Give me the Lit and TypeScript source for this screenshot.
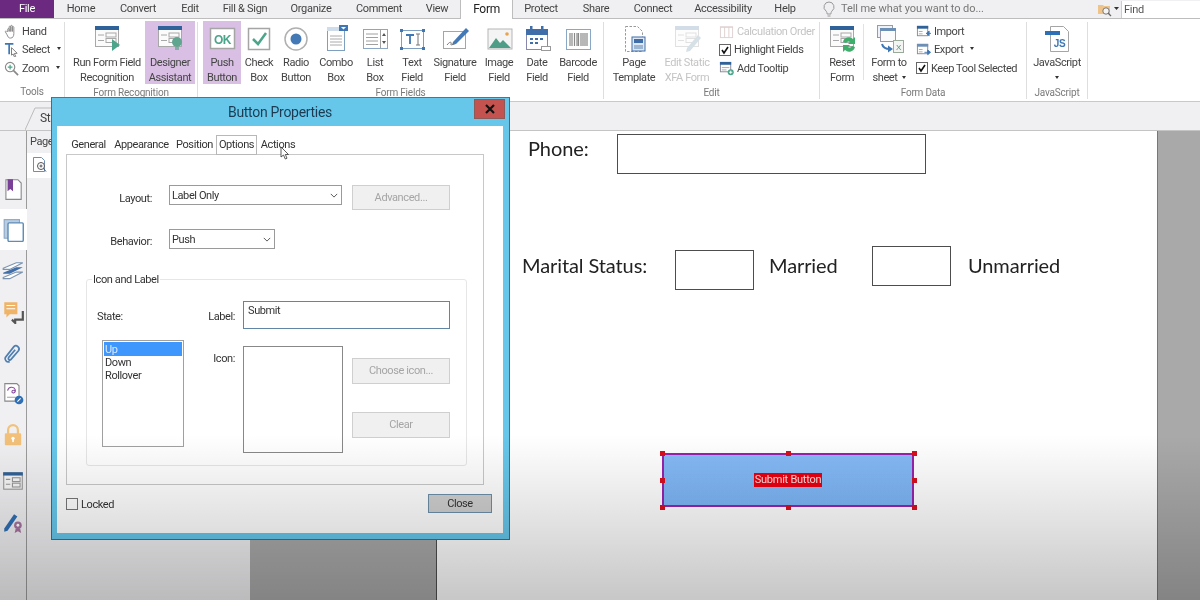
import { LitElement, css, html, svg } from "lit";
import { customElement } from "lit/decorators.js";

const tabs = [
  ["Home", 54], ["Convert", 60], ["Edit", 44], ["Fill & Sign", 66], ["Organize", 66], ["Comment", 70], ["View", 46],
  ["Form", 53], ["Protect", 56], ["Share", 54], ["Connect", 60], ["Accessibility", 80], ["Help", 44],
] as [string, number][];

// shared window glyph used by a few of the form icons
const win = (c = "#2f6299", s = "#a8a8a8") => svg`
  <rect x="3.5" y="2.5" width="23" height="20" fill="#fbfbfb" stroke=${s}/>
  <rect x="3" y="2" width="24" height="4" fill=${c}/>
  <path d="M6 11h6M6 16.500h6" stroke=${s}/>
  <rect x="14" y="9" width="10" height="4" fill="none" stroke=${s}/>
  <rect x="14" y="14.500" width="10" height="4" fill="none" stroke=${s}/>`;

const icons: Record<string, any> = {
  run: svg`${win()}<path d="M20 15l8 6-8 6z" fill="#4ba58a"/>`,
  designer: svg`${win()}<circle cx="22" cy="18" r="5" fill="#5fa58f"/><rect x="20" y="23" width="4" height="3" fill="#8aa"/>`,
  push: svg`<rect x="3.500" y="4.500" width="24" height="20" fill="#fff" stroke="#a5a5a5" stroke-width="1.500"/><text x="15.500" y="19.500" text-anchor="middle" font-family="Liberation Sans" font-weight="700" font-size="12" fill="#4ba58a">OK</text>`,
  check: svg`<rect x="4.500" y="4.500" width="21" height="21" fill="#fff" stroke="#a5a5a5" stroke-width="1.500"/><path d="M9 15l5 5 8-11" fill="none" stroke="#4ba58a" stroke-width="2.500"/>`,
  radio: svg`<circle cx="15" cy="15" r="11" fill="#fff" stroke="#b0b0b0" stroke-width="1.500"/><circle cx="15" cy="15" r="5.500" fill="#4379b5"/>`,
  combo: svg`<rect x="6.500" y="3.500" width="17" height="23" fill="#fff" stroke="#7f9fc0"/><rect x="6" y="3" width="18" height="4" fill="#cfdcea"/><path d="M9 12h12M9 15h12M9 18h12M9 21h12" stroke="#aaa"/><rect x="18" y="1" width="9" height="6" fill="#3f77b4"/><path d="M20 3l2.500 2.500L25 3z" fill="#fff"/>`,
  list: svg`<rect x="3.500" y="5.500" width="24" height="19" fill="#fff" stroke="#8aa7c6"/><path d="M20.500 5.500v19M6 10h12M6 13.500h12M6 17h12M6 20.500h12" stroke="#a0a0a0"/><path d="M24 9l-2 3h4zM24 20l-2-3h4z" fill="#555"/>`,
  text: svg`<rect x="4.500" y="6.500" width="22" height="18" fill="#fff" stroke="#7f9fc0"/><g fill="#3f77b4"><rect x="3" y="5" width="3" height="3"/><rect x="25" y="5" width="3" height="3"/><rect x="3" y="23" width="3" height="3"/><rect x="25" y="23" width="3" height="3"/></g><path d="M9 11h8M13 11v9" stroke="#3f77b4" stroke-width="1.800" fill="none"/><path d="M21 10v11M19 10h4M19 21h4" stroke="#777" fill="none"/>`,
  signature: svg`<rect x="3.500" y="7.500" width="22" height="17" fill="#fff" stroke="#a5a5a5"/><path d="M13 18L26 4l3 3-13 13-4 1z" fill="#4379b5"/><path d="M7 21c3-4 5-3 4-1s3 0 5-1" fill="none" stroke="#777"/>`,
  image: svg`<rect x="4" y="5" width="24" height="20" fill="#f4f4f4" stroke="#b5b5b5"/><path d="M5 24l7-10 4 5 3-3 8 8z" fill="#4f9d86"/><circle cx="23" cy="10" r="1.800" fill="#e9a24f"/>`,
  date: svg`<rect x="4.500" y="5.500" width="21" height="20" fill="#fff" stroke="#88a"/><rect x="4" y="5" width="22" height="6" fill="#3f6ea8"/><rect x="8" y="2" width="2.500" height="5" fill="#3f6ea8"/><rect x="19" y="2" width="2.500" height="5" fill="#3f6ea8"/><g fill="#3f6ea8"><rect x="8" y="14" width="3" height="2"/><rect x="13" y="14" width="3" height="2"/><rect x="18" y="14" width="3" height="2"/><rect x="8" y="18" width="3" height="2"/><rect x="13" y="18" width="3" height="2"/></g><rect x="19.500" y="22.500" width="9" height="4" fill="#fff" stroke="#999"/>`,
  barcode: svg`<rect x="3.500" y="5.500" width="24" height="20" fill="#fff" stroke="#8aa7c6"/><path d="M7 9v13M9 9v13M11.500 9v13M14 9v13M15.500 9v13M18 9v13M20 9v13M22 9v13M24 9v13" stroke="#888" stroke-width="1.200"/>`,
  template: svg`<path d="M6.500 2.500h12l5 5v20h-17z" fill="#fff" stroke="#999" stroke-dasharray="2.500 1.500"/><rect x="13" y="13" width="13" height="14" fill="#dfe8f2" stroke="#3f6ea8"/><rect x="15" y="15" width="9" height="4" fill="#3f6ea8"/><rect x="15" y="21" width="9" height="4" fill="#9cb6d3"/>`,
  xfa: svg`<g opacity=".35">${win("#7f9fc0", "#aaa")}<path d="M15 24L26 11l3 3-11 13-4 1z" fill="#8ab"/></g>`,
  reset: svg`${win()}<path d="M16 18a6 6 0 0 1 10-3l2-2v7h-7l2-2a3 3 0 0 0-4 1zM28 23a6 6 0 0 1-10 3l-2 2v-7h7l-2 2a3 3 0 0 0 4-1z" fill="#3fae6b"/>`,
  sheet: svg`<rect x="3.500" y="1.500" width="15" height="12" fill="#eef2f6" stroke="#99a"/><rect x="6.500" y="4.500" width="15" height="13" fill="#fbfbfb" stroke="#99a"/><rect x="6" y="4" width="16" height="3" fill="#6c8fb5"/><path d="M8 20c1 4 4 5 8 5" fill="none" stroke="#3f77b4" stroke-width="2"/><path d="M14 21.500l5 3.500-5 3.500z" fill="#3f77b4"/><rect x="19.500" y="16.500" width="10" height="12" fill="#f4f4f4" stroke="#9a9"/><text x="24.500" y="26" text-anchor="middle" font-family="Liberation Sans" font-size="8" fill="#3f9a5f">X</text>`,
  js: svg`<path d="M8.500 2.500h13l5 5v20h-18z" fill="#fff" stroke="#a5a5a5"/><rect x="3" y="7" width="15" height="4" fill="#2f6fb5"/><text x="17.500" y="23" text-anchor="middle" font-family="Liberation Sans" font-weight="700" font-size="10" fill="#3f77b4">JS</text>`,
};

const small: Record<string, any> = {
  hand: svg`<path d="M4 8V5.500c0-1 1.500-1 1.500 0V8V3c0-1 1.700-1 1.700 0v5-5.800c0-1 1.700-1 1.700 0V8V3.500c0-1 1.600-1 1.600 0V10c0 3-1 5-3.500 5S4.500 14 3 11L1.500 8.500C1 7.500 2.300 7 3 8z" fill="#fff" stroke="#888"/>`,
  select: svg`<path d="M1 2h9M5.500 2v11" stroke="#3f77b4" stroke-width="1.800" fill="none"/><path d="M8 6l6 6-3 .300 1.500 3-1.500.500-1.300-3L8 14z" fill="#fff" stroke="#777"/>`,
  zoom: svg`<circle cx="6.500" cy="6.500" r="5" fill="#fff" stroke="#888" stroke-width="1.200"/><path d="M10 10l5 5" stroke="#888" stroke-width="1.800"/><path d="M4 6.500h5M6.500 4v5" stroke="#4ba58a" stroke-width="1.300"/>`,
  calc: svg`<g opacity=".4"><rect x="1.500" y="3.500" width="13" height="11" fill="#fff" stroke="#b08a8a"/><path d="M1 3h14M6 3v11M10.500 3v11" stroke="#b08a8a"/></g>`,
  tooltip: svg`<rect x="1.500" y="1.500" width="11" height="10" fill="#fff" stroke="#889"/><rect x="1" y="1" width="12" height="3" fill="#2f6299"/><path d="M3 7h8M3 9.500h5" stroke="#aaa"/><circle cx="12.500" cy="12" r="3.200" fill="#4ba58a"/><path d="M10.800 12h3.400M12.500 10.300v3.400" stroke="#fff"/>`,
  import: svg`<rect x="1.500" y="2.500" width="11" height="10" fill="#fff" stroke="#889"/><rect x="1" y="2" width="12" height="3" fill="#2f6299"/><path d="M3 8h4M3 10.500h4" stroke="#aaa"/><path d="M16 10H11M11 10l3-2.500v5z" stroke="#3f77b4" fill="#3f77b4"/>`,
  export: svg`<rect x="1.500" y="2.500" width="11" height="10" fill="#fff" stroke="#889"/><rect x="1" y="2" width="12" height="3" fill="#6c8fb5"/><path d="M3 8h4M3 10.500h4" stroke="#aaa"/><path d="M9 11h5M15.500 11l-3-2.500v5z" stroke="#3f77b4" fill="#3f77b4"/>`,
};

const side: any[] = [
  svg`<path d="M4.500 2.500h11l3 3v15h-14z" fill="#fff" stroke="#888"/><path d="M6 2h5v11l-2.500-2L6 13z" fill="#7a3f96"/>`,
  svg`<rect x="2" y="1.500" width="14" height="17" fill="#b8cde2" stroke="#8aa7c6"/><rect x="5.500" y="4.500" width="14" height="17" rx="1" fill="#fff" stroke="#5f8cb8" stroke-width="1.300"/>`,
  svg`<path d="M2 17L14 12H20L8 18H2z" fill="#fff" stroke="#7a94b0"/><path d="M2 12.500L14 7.500H20L8 13.500H2z" fill="#3f6ea8"/><path d="M2 8.500L14 3.500H20L8 9.500H2z" fill="#fff" stroke="#7a94b0"/>`,
  svg`<path d="M3 2h12v11H8l-3 3v-3H3z" fill="#f0b469"/><path d="M5 5h8M5 8h8" stroke="#fff"/><path d="M20 10v8h-7v3l-3-3" fill="none" stroke="#555" stroke-width="2"/>`,
  svg`<path d="M8 19c-3 1-5-2-4-4l8-10c2-2 6 1 4 4l-7 8c-1 1-3 0-2-2l6-7" fill="none" stroke="#4f7fb0" stroke-width="1.600"/>`,
  svg`<path d="M3.500 1.500h11l2 2v14h-13z" fill="#fff" stroke="#888"/><path d="M6 8c1-4 6-4 7-1s-3 4-3 2 3-2 3 0" fill="none" stroke="#8a4f9e"/><path d="M5.500 14h8" stroke="#aaa"/><circle cx="16.500" cy="16.500" r="4" fill="#2f6fb5"/><path d="M15 18l3-3" stroke="#fff"/>`,
  svg`<path d="M7 10V6.500a4.500 4.500 0 0 1 9 0V10" fill="none" stroke="#f0c27c" stroke-width="2" transform="translate(-.5 0)"/><rect x="3.500" y="9.500" width="15" height="11" rx="1" fill="#f2c078"/><circle cx="11" cy="14" r="1.500" fill="#fff"/><rect x="10.300" y="14" width="1.500" height="3.500" fill="#fff"/>`,
  svg`<rect x="2.500" y="3.500" width="17" height="15" fill="#f7f7f7" stroke="#999"/><rect x="2" y="3" width="18" height="3" fill="#2f6299"/><path d="M4.500 9.500h4M4.500 14h4" stroke="#999"/><rect x="10.500" y="8" width="7" height="3.500" fill="none" stroke="#999"/><rect x="10.500" y="13" width="7" height="3.500" fill="none" stroke="#999"/>`,
  svg`<path d="M3 17L12 4l3 2-9 13-3 1z" fill="#2f6fb5"/><circle cx="15.500" cy="14" r="3.500" fill="#a5739f"/><path d="M13.500 17l-1 4 3-1.500 3 1.500-1-4" fill="#a5739f"/><circle cx="15.500" cy="14" r="1.300" fill="#fff"/>`,
];

const chevron = html`<svg class="chev" viewBox="0 0 10 6"><path d="M1 1l4 4 4-4" fill="none" stroke="#444" stroke-width="1.100"/></svg>`;

@customElement("button-props")
class ButtonProps extends LitElement {
  static styles = css`
    :host {
      display: block;
      width: 459px;
      height: 443px;
      box-sizing: border-box;
      border: 1px solid #3d6f88;
      border-top-color: #46788f;
      background: #66c7eb;
      padding: 0 6px 5px 5px;
      font: 11px/14px Roboto, sans-serif;
      letter-spacing: -0.4px;
      color: #333;
    }
    .title {
      position: relative;
      height: 28px;
      text-align: center;
      font-size: 14px;
      line-height: 29px;
      letter-spacing: -0.3px;
      color: #1c3b52;
    }
    .close {
      position: absolute;
      right: -2px;
      top: 1px;
      width: 31px;
      height: 20px;
      background: #c4534f;
      border: 1px solid #8d5a5a;
      box-sizing: border-box;
      display: flex;
      align-items: center;
      justify-content: center;
    }
    .close svg {
      width: 10px;
      height: 10px;
    }
    .body {
      height: 407px;
      background: #fff;
      padding-top: 9px;
      box-sizing: border-box;
    }
    .tabs {
      display: flex;
      height: 20px;
      margin-left: 10px;
      position: relative;
      z-index: 1;
    }
    .tab {
      text-align: center;
      line-height: 19px;
      box-sizing: border-box;
    }
    .tab.on {
      border: 1px solid #b8b8b8;
      line-height: 17px;
      background: #fff;
    }
    .panel {
      margin: -1px 0 0 9px;
      width: 418px;
      height: 331px;
      box-sizing: border-box;
      border: 1px solid #c8c8c8;
    }
    .row {
      display: flex;
      align-items: flex-start;
    }
    .row.first {
      margin-top: 30px;
    }
    .row.second {
      margin-top: 19px;
    }
    .rlabel {
      width: 85px;
      margin-right: 17px;
      text-align: right;
      padding-top: 7px;
    }
    .select {
      display: flex;
      align-items: center;
      justify-content: space-between;
      box-sizing: border-box;
      height: 20px;
      padding: 1px 3px 0 2px;
      background: #fff;
      border: 1px solid #9a9a9a;
    }
    .chev {
      width: 8px;
      height: 5px;
    }
    .btn {
      box-sizing: border-box;
      width: 98px;
      height: 26px;
      background: #f0f0f0;
      border: 1px solid #cfcfcf;
      color: #a5a5a5;
      display: flex;
      align-items: center;
      justify-content: center;
    }
    fieldset {
      margin: 22px 0 0 19px;
      width: 381px;
      height: 195px;
      padding: 0;
      box-sizing: border-box;
      border: 1px solid #e6e6e6;
      border-radius: 3px;
    }
    legend {
      margin-left: 5px;
      padding: 2px 1px 0;
      font-size: 11px;
      line-height: 14px;
    }
    .grid {
      display: grid;
      grid-template-columns: 115px 41px 1fr;
      grid-template-rows: 28px auto;
      row-gap: 11px;
      padding-top: 14px;
    }
    .state {
      padding: 9px 0 0 10px;
    }
    .lab {
      text-align: right;
      padding: 9px 8px 0 0;
    }
    .lab.icon {
      padding-top: 12px;
    }
    .input {
      width: 207px;
      height: 28px;
      box-sizing: border-box;
      border: 1px solid #5f87a5;
      padding: 2px 4px;
    }
    .list {
      margin-left: 15px;
      width: 82px;
      height: 107px;
      box-sizing: border-box;
      border: 1px solid #a0a0a0;
      padding: 1px;
      line-height: 13px;
    }
    .list div {
      padding-left: 1px;
    }
    .list .sel {
      background: #3e97fd;
      color: #d9e9ff;
      height: 14px;
      line-height: 15px;
    }
    .iconrow {
      display: flex;
      gap: 9px;
      margin-top: 6px;
    }
    .iconbox {
      width: 100px;
      height: 107px;
      box-sizing: border-box;
      border: 1px solid #888;
    }
    .btns {
      display: flex;
      flex-direction: column;
      gap: 28px;
      margin-top: 12px;
    }
    .foot {
      display: flex;
      align-items: center;
      justify-content: space-between;
      margin: 9px 11px 0 9px;
      height: 19px;
    }
    .locked {
      display: flex;
      align-items: center;
      gap: 3px;
    }
    .locked span {
      padding-top: 2px;
    }
    .box {
      width: 12px;
      height: 12px;
      box-sizing: border-box;
      border: 1px solid #777;
      background: #fff;
    }
    .closebtn {
      box-sizing: border-box;
      width: 64px;
      height: 19px;
      background: #cfcfcf;
      border: 1px solid #6d8fa8;
      text-align: center;
      line-height: 17px;
    }
    .cursor {
      position: absolute;
      left: 228px;
      top: 48px;
      width: 10px;
      height: 14px;
      z-index: 2;
    }
  `;

  render() {
    const t = [["General", 43], ["Appearance", 63], ["Position", 43], ["Options", 41], ["Actions", 42]] as [string, number][];
    return html`
      <div class="title">
        Button Properties
        <div class="close">
          <svg viewBox="0 0 10 10"><path d="M1 1l8 8M9 1l-8 8" stroke="#111" stroke-width="2.200"/></svg>
        </div>
      </div>
      <div class="body">
        <div class="tabs">
          ${t.map(([n, w]) => html`<div class="tab ${n === "Options" ? "on" : ""}" style="width:${w}px">${n}</div>`)}
        </div>
        <div class="panel">
          <div class="row first">
            <div class="rlabel">Layout:</div>
            <div class="select" style="width:173px">Label Only ${chevron}</div>
            <div class="btn" style="margin-left:10px;height:25px">Advanced...</div>
          </div>
          <div class="row second">
            <div class="rlabel" style="padding-top:6px">Behavior:</div>
            <div class="select" style="width:106px">Push ${chevron}</div>
          </div>
          <fieldset>
            <legend>Icon and Label</legend>
            <div class="grid">
              <div class="state">State:</div>
              <div class="lab">Label:</div>
              <div class="input">Submit</div>
              <div class="list">
                <div class="sel">Up</div>
                <div>Down</div>
                <div>Rollover</div>
              </div>
              <div class="lab icon">Icon:</div>
              <div class="iconrow">
                <div class="iconbox"></div>
                <div class="btns">
                  <div class="btn">Choose icon...</div>
                  <div class="btn">Clear</div>
                </div>
              </div>
            </div>
          </fieldset>
        </div>
        <div class="foot">
          <div class="locked"><div class="box"></div><span>Locked</span></div>
          <div class="closebtn">Close</div>
        </div>
      </div>
      <svg class="cursor" viewBox="0 0 10 14">
        <path d="M1 1v10l2.500-2 1.800 4 1.700-.8L5.300 8.500H8.500z" fill="#fff" stroke="#333" stroke-width=".8"/>
      </svg>
    `;
  }
}

@customElement("app-root")
class AppRoot extends LitElement {
  static styles = css`
    :host {
      display: block;
      position: relative;
      width: 1200px;
      height: 600px;
      overflow: hidden;
      background: #f0eff1;
      font: 11px/15px Roboto, sans-serif;
      letter-spacing: -0.4px;
      color: #444;
      filter: blur(0.4px);
    }
    .tabbar {
      display: flex;
      height: 18px;
      background: #f0f0f2;
      border-bottom: 1px solid #bdbdbd;
      line-height: 18px;
      font-size: 11px;
      letter-spacing: -0.3px;
    }
    .file {
      width: 54px;
      background: #6b2a80;
      color: #fff;
      text-align: center;
    }
    .t {
      text-align: center;
      box-sizing: border-box;
    }
    .t.on {
      background: #fff;
      height: 19px;
      border: 1px solid #bdbdbd;
      border-width: 0 1px;
      color: #222;
      font-size: 12px;
    }
    .tell {
      display: flex;
      align-items: center;
      margin-left: 16px;
      gap: 6px;
      color: #777;
      flex: 1;
      letter-spacing: -0.08px;
    }
    .tell svg {
      width: 12px;
      height: 16px;
    }
    .finder {
      display: flex;
      align-items: center;
      gap: 1px;
      width: 103px;
    }
    .finder svg {
      width: 23px;
      height: 15px;
    }
    .find {
      flex: 1;
      background: #fff;
      height: 17px;
      padding-left: 2px;
      color: #555;
      border-left: 1px solid #ccc;
    }
    .ribbon {
      display: flex;
      height: 82px;
      background: #fff;
      border-bottom: 1px solid #c9c9c9;
      box-sizing: content-box;
    }
    .group {
      display: flex;
      flex-direction: column;
      box-sizing: border-box;
      margin-top: 3px;
      height: 77px;
      border-right: 1px solid #dedede;
    }
    .gtools {
      display: flex;
      height: 62px;
      margin-top: -1px;
    }
    .glabel {
      text-align: center;
      font-size: 10px;
      line-height: 14px;
      color: #7a7a7a;
      margin-top: 3px;
      letter-spacing: -0.2px;
    }
    .tool {
      display: flex;
      flex-direction: column;
      align-items: center;
      text-align: center;
      line-height: 15px;
      padding-top: 3px;
      box-sizing: border-box;
      height: 63px;
    }
    .tool svg.ic {
      width: 30px;
      height: 30px;
      flex: none;
      margin-bottom: 1px;
    }
    .tool.hl {
      background: #d8bfe3;
    }
    .tool.off {
      color: #c4c4c4;
    }
    .caret {
      display: inline-block;
      width: 0;
      height: 0;
      margin: 0 0 2px 4px;
      border: 2.500px solid transparent;
      border-top: 3px solid #333;
      border-bottom: 0;
      vertical-align: middle;
    }
    .col {
      display: flex;
      flex-direction: column;
      padding-top: 1px;
    }
    .sm {
      display: flex;
      align-items: center;
      height: 18.500px;
      gap: 3px;
      white-space: nowrap;
    }
    .sm svg {
      width: 15px;
      height: 15px;
      flex: none;
    }
    .sm.off {
      color: #c4c4c4;
    }
    .cb {
      width: 12px;
      height: 12px;
      flex: none;
      box-sizing: border-box;
      border: 1px solid #666;
      background: #fff;
      display: flex;
    }
    .cb svg {
      width: 10px;
      height: 10px;
    }
    .vsep {
      width: 1px;
      height: 56px;
      background: #e2e2e2;
      margin: 3px 1px 0;
    }
    .band {
      height: 28px;
      background: #f0f0f2;
      border-bottom: 1px solid #c4c4c4;
      display: flex;
      align-items: flex-end;
      padding-left: 25px;
    }
    .doc {
      position: relative;
      padding: 0 0 0 15px;
      height: 23px;
      line-height: 22px;
      width: 60px;
      box-sizing: border-box;
      font-size: 12px;
    }
    .doc svg {
      position: absolute;
      left: 0;
      top: 0;
      width: 60px;
      height: 23px;
    }
    .main {
      display: flex;
      height: 469px;
    }
    .sidebar {
      width: 27px;
      flex: none;
      box-sizing: border-box;
      border-right: 1px solid #9b9b9b;
      padding-top: 37px;
      display: flex;
      flex-direction: column;
    }
    .si {
      height: 41px;
      display: flex;
      align-items: center;
      justify-content: center;
    }
    .si.on {
      background: #fff;
      margin-right: -1px;
    }
    .si svg {
      width: 24px;
      height: 24px;
    }
    .si.gap {
      margin-top: 5px;
    }
    .pane {
      width: 223px;
      flex: none;
    }
    .pane .head {
      height: 22px;
      line-height: 22px;
      padding-left: 3px;
    }
    .pane .thumb {
      background: #fff;
      height: 25px;
      width: 60px;
      padding: 3px 0 0 5px;
      box-sizing: border-box;
    }
    .pane .thumb svg {
      width: 15px;
      height: 17px;
    }
    .gray {
      background: #a9a9a9;
    }
    .gl {
      width: 187px;
      flex: none;
      border-right: 1px solid #4d4d4d;
      box-sizing: border-box;
    }
    .gr {
      flex: 1;
      border-left: 1px solid #777;
    }
    .page {
      width: 720px;
      flex: none;
      background: #fff;
      padding: 3px 0 0 85px;
      box-sizing: border-box;
      font: 20px/26px Lato, sans-serif;
      letter-spacing: -0.1px;
      color: #222;
    }
    .phone {
      display: flex;
      align-items: flex-start;
      margin-left: 6px;
    }
    .phone span {
      width: 89px;
      margin-top: 1px;
    }
    .fbox {
      box-sizing: border-box;
      border: 2px solid #4d4d4d;
      border-width: 1.500px;
      background: #fff;
      height: 40px;
    }
    .marital {
      display: flex;
      align-items: flex-start;
      margin-top: 72px;
    }
    .marital span {
      margin-top: 6px;
    }
    .selection {
      position: relative;
      box-sizing: border-box;
      margin: 163px 0 0 140px;
      width: 252px;
      height: 54px;
      background: linear-gradient(#85baf6, #7db6f6);
      border: 2px solid #9a22ac;
      display: flex;
      align-items: center;
      justify-content: center;
    }
    .selection b {
      font: 400 11px/14px Roboto, sans-serif;
      letter-spacing: -0.25px;
      background: #ea0010;
      color: #fbdede;
      padding: 0 1px;
    }
    .h {
      position: absolute;
      width: 5px;
      height: 5px;
      background: #d80f1f;
    }
    .dialog {
      position: absolute;
      left: 51px;
      top: 97px;
    }
    .shade {
      position: absolute;
      left: 0;
      right: 0;
      top: 435px;
      bottom: 0;
      background: linear-gradient(rgba(0, 0, 0, 0), rgba(0, 0, 0, 0.22));
      pointer-events: none;
    }
  `;

  tool(name: string, w: number, a: string, b: string, opts: { hl?: boolean; off?: boolean; caret?: boolean } = {}) {
    return html`<div class="tool ${opts.hl ? "hl" : ""} ${opts.off ? "off" : ""}" style="width:${w}px">
      <svg class="ic" viewBox="0 0 30 30">${icons[name]}</svg>
      <div>${a}</div>
      <div>${b}${opts.caret ? html`<i class="caret"></i>` : ""}</div>
    </div>`;
  }

  check() {
    return html`<div class="cb"><svg viewBox="0 0 10 10"><path d="M2 5l2 3 4-6" fill="none" stroke="#111" stroke-width="1.600"/></svg></div>`;
  }

  render() {
    const handles = [
      [-4, -4], [122, -4], [248, -4],
      [-4, 23], [248, 23],
      [-4, 50], [122, 50], [248, 50],
    ];
    return html`
      <div class="tabbar">
        <div class="file">File</div>
        ${tabs.map(([n, w]) => html`<div class="t ${n === "Form" ? "on" : ""}" style="width:${w}px">${n}</div>`)}
        <div class="tell">
          <svg viewBox="0 0 12 16"><path d="M6 1a5 5 0 0 0-3 9c1 1 1 2 1 3h4c0-1 0-2 1-3A5 5 0 0 0 6 1zM4.500 15h3" fill="none" stroke="#999"/></svg>
          Tell me what you want to do...
        </div>
        <div class="finder">
          <svg viewBox="0 0 23 15"><path d="M1 3h5l1 1h6v8H1z" fill="#eec48a"/><circle cx="9" cy="9" r="3.200" fill="#f4f4f4" stroke="#777"/><path d="M11 11l3 3" stroke="#666" stroke-width="1.300"/><path d="M17 5h5l-2.500 3z" fill="#333"/></svg>
          <div class="find">Find</div>
        </div>
      </div>

      <div class="ribbon">
        <div class="group" style="width:65px">
          <div class="col" style="padding-left:4px;height:62px;margin-top:-1px">
            <div class="sm"><svg viewBox="0 0 16 16">${small.hand}</svg>Hand</div>
            <div class="sm"><svg viewBox="0 0 16 16">${small.select}</svg>Select<i class="caret"></i></div>
            <div class="sm"><svg viewBox="0 0 16 16">${small.zoom}</svg>Zoom<i class="caret"></i></div>
          </div>
          <div class="glabel">Tools</div>
        </div>
        <div class="group" style="width:133px">
          <div class="gtools" style="padding-left:4px">
            ${this.tool("run", 76, "Run Form Field", "Recognition")}
            ${this.tool("designer", 50, "Designer", "Assistant", { hl: true })}
          </div>
          <div class="glabel">Form Recognition</div>
        </div>
        <div class="group" style="width:406px">
          <div class="gtools" style="padding-left:5px">
            ${this.tool("push", 38, "Push", "Button", { hl: true })}
            ${this.tool("check", 36, "Check", "Box")}
            ${this.tool("radio", 38, "Radio", "Button")}
            ${this.tool("combo", 42, "Combo", "Box")}
            ${this.tool("list", 36, "List", "Box")}
            ${this.tool("text", 38, "Text", "Field")}
            ${this.tool("signature", 48, "Signature", "Field")}
            ${this.tool("image", 40, "Image", "Field")}
            ${this.tool("date", 36, "Date", "Field")}
            ${this.tool("barcode", 46, "Barcode", "Field")}
          </div>
          <div class="glabel">Form Fields</div>
        </div>
        <div class="group" style="width:216px">
          <div class="gtools" style="padding-left:6px">
            ${this.tool("template", 48, "Page", "Template")}
            ${this.tool("xfa", 58, "Edit Static", "XFA Form", { off: true })}
            <div class="col" style="padding-left:3px">
              <div class="sm off"><svg viewBox="0 0 16 16">${small.calc}</svg>Calculation Order</div>
              <div class="sm">${this.check()}Highlight Fields</div>
              <div class="sm"><svg viewBox="0 0 16 16">${small.tooltip}</svg>Add Tooltip</div>
            </div>
          </div>
          <div class="glabel">Edit</div>
        </div>
        <div class="group" style="width:207px">
          <div class="gtools" style="padding-left:2px">
            ${this.tool("reset", 40, "Reset", "Form")}
            <div class="vsep"></div>
            ${this.tool("sheet", 48, "Form to", "sheet", { caret: true })}
            <div class="col" style="padding-left:3px">
              <div class="sm"><svg viewBox="0 0 16 16">${small.import}</svg>Import</div>
              <div class="sm"><svg viewBox="0 0 16 16">${small.export}</svg>Export<i class="caret"></i></div>
              <div class="sm">${this.check()}Keep Tool Selected</div>
            </div>
          </div>
          <div class="glabel">Form Data</div>
        </div>
        <div class="group" style="width:61px">
          <div class="gtools">
            <div class="tool" style="width:60px">
              <svg class="ic" viewBox="0 0 30 30">${icons.js}</svg>
              <div>JavaScript</div>
              <div><i class="caret" style="margin-left:0"></i></div>
            </div>
          </div>
          <div class="glabel">JavaScript</div>
        </div>
      </div>

      <div class="band">
        <div class="doc">
          <svg viewBox="0 0 60 23"><path d="M0 23L10 1h50" fill="none" stroke="#bbb"/></svg>
          Start
        </div>
      </div>

      <div class="main">
        <div class="sidebar">
          ${side.map((s, i) => html`<div class="si ${i === 1 ? "on" : ""} ${i === 7 ? "gap" : ""}"><svg viewBox="0 0 22 22">${s}</svg></div>`)}
        </div>
        <div class="pane">
          <div class="head">Pages</div>
          <div class="thumb">
            <svg viewBox="0 0 15 17"><path d="M1.500 1.500h8l3 3v11h-11z" fill="#fff" stroke="#6c8fb5"/><circle cx="9" cy="10" r="3.500" fill="#fff" stroke="#555"/><path d="M7.500 10h3M9 8.500v3M11.500 12.500l2.500 3" stroke="#555"/></svg>
          </div>
        </div>
        <div class="gray gl"></div>
        <div class="page">
          <div class="phone">
            <span>Phone:</span>
            <div class="fbox" style="width:309px"></div>
          </div>
          <div class="marital">
            <span style="width:153px">Marital Status:</span>
            <div class="fbox" style="width:79px;margin-top:4px"></div>
            <span style="width:103px;margin-left:15px">Married</span>
            <div class="fbox" style="width:79px"></div>
            <span style="margin-left:17px">Unmarried</span>
          </div>
          <div class="selection">
            <b>Submit Button</b>
            ${handles.map(([x, y]) => html`<i class="h" style="left:${x}px;top:${y}px"></i>`)}
          </div>
        </div>
        <div class="gray gr"></div>
      </div>

      <button-props class="dialog"></button-props>
      <div class="shade"></div>
    `;
  }
}
